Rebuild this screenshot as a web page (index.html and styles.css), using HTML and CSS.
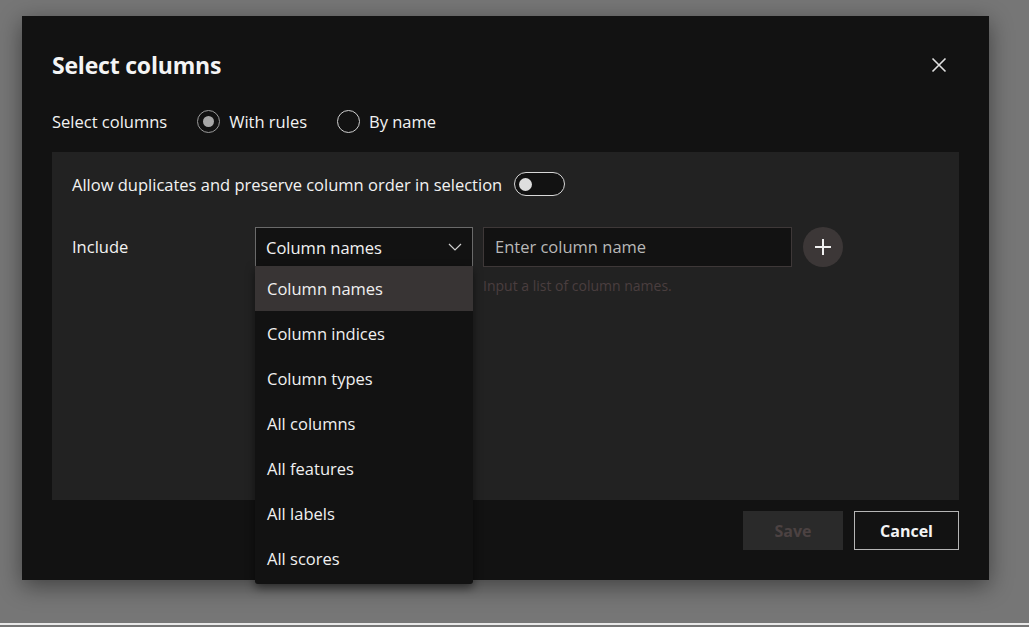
FILE: index.html
```html
<!DOCTYPE html>
<html>
<head>
<meta charset="utf-8">
<link rel="stylesheet" href="styles.css">
</head>
<body>
<div class="backdrop">
  <div class="dialog">
    <div class="header">
      <h1 class="title">Select columns</h1>
      <button class="close" aria-label="Close">
        <svg width="16" height="16" viewBox="0 0 16 16"><path d="M1.5 1.5 L14.5 14.5 M14.5 1.5 L1.5 14.5" stroke="#e0e0e0" stroke-width="1.6" fill="none"/></svg>
      </button>
    </div>
    <div class="mode-row">
      <span class="mode-label">Select columns</span>
      <label class="radio"><span class="radio-dot checked"></span>With rules</label>
      <label class="radio"><span class="radio-dot"></span>By name</label>
    </div>
    <div class="panel">
      <div class="toggle-row">
        <span>Allow duplicates and preserve column order in selection</span>
        <span class="toggle"><span class="knob"></span></span>
      </div>
      <div class="rule-row">
        <span class="rule-label">Include</span>
        <div class="select-wrap">
          <div class="select">
            <span>Column names</span>
            <svg width="14" height="8" viewBox="0 0 14 8"><path d="M1 1 L7 7 L13 1" stroke="#cfcfcf" stroke-width="1.2" fill="none"/></svg>
          </div>
          <ul class="menu">
            <li class="active">Column names</li>
            <li>Column indices</li>
            <li>Column types</li>
            <li>All columns</li>
            <li>All features</li>
            <li>All labels</li>
            <li>All scores</li>
          </ul>
        </div>
        <div class="input-wrap">
          <div class="input">Enter column name</div>
          <div class="hint">Input a list of column names.</div>
        </div>
        <button class="add" aria-label="Add">
          <svg width="18" height="18" viewBox="0 0 18 18"><path d="M9 1 V17 M1 9 H17" stroke="#f0f0f0" stroke-width="2" fill="none"/></svg>
        </button>
      </div>
    </div>
    <div class="footer">
      <button class="btn save">Save</button>
      <button class="btn cancel">Cancel</button>
    </div>
  </div>
</div>
</body>
</html>
```

FILE: styles.css
```css
* { box-sizing: border-box; }
html, body { margin: 0; padding: 0; }
body {
  background: #767676;
  font-family: "Segoe UI", "Open Sans", "Noto Sans", sans-serif;
  color: #f2f2f2;
  width: 1029px;
  height: 627px;
  overflow: hidden;
}
.backdrop {
  padding: 16px 0 0 22px;
  height: 625px;
  border-bottom: 2px solid #e8e8e8;
}
.dialog {
  position: relative;
  width: 967px;
  height: 564px;
  background: #121212;
  padding: 34px 30px 30px 30px;
  display: flex;
  flex-direction: column;
  box-shadow: 0 6px 22px rgba(0,0,0,0.45);
}
.header {
  display: flex;
  justify-content: space-between;
  align-items: center;
  height: 30px;
}
.title {
  margin: 0;
  font-size: 23px;
  font-weight: 700;
  letter-spacing: -0.2px;
  color: #f4f4f4;
}
.close {
  background: none;
  border: 0;
  padding: 0;
  margin-right: 12px;
  width: 16px;
  height: 16px;
  display: flex;
}
.mode-row {
  display: flex;
  align-items: center;
  height: 30px;
  margin-top: 26px;
  font-size: 16.5px;
}
.mode-label { margin-right: 30px; }
.radio {
  display: flex;
  align-items: center;
  margin-right: 30px;
  color: #f2f2f2;
}
.radio-dot {
  width: 23px;
  height: 23px;
  border-radius: 50%;
  border: 1.5px solid #cfcfcf;
  margin-right: 9px;
  display: flex;
  align-items: center;
  justify-content: center;
}
.radio-dot.checked { border-color: #9a9a9a; }
.radio-dot.checked::after {
  content: "";
  width: 11px;
  height: 11px;
  border-radius: 50%;
  background: #a8a8a8;
}
.panel {
  margin-top: 16px;
  height: 348px;
  background: #222222;
  padding: 20px 20px;
}
.toggle-row {
  display: flex;
  align-items: center;
  height: 24px;
  font-size: 16.5px;
}
.toggle {
  margin-left: 12px;
  width: 51px;
  height: 24px;
  border-radius: 12px;
  border: 1.5px solid #d8d8d8;
  background: #121212;
  display: flex;
  align-items: center;
  padding-left: 4px;
}
.knob {
  width: 13px;
  height: 13px;
  border-radius: 50%;
  background: #dedede;
}
.rule-row {
  display: flex;
  align-items: flex-start;
  margin-top: 31px;
}
.rule-label {
  width: 183px;
  font-size: 16.5px;
  line-height: 40px;
}
.select-wrap {
  position: relative;
  width: 218px;
}
.select {
  height: 40px;
  border: 1px solid #6a6a6a;
  background: #121212;
  display: flex;
  align-items: center;
  justify-content: space-between;
  padding: 0 10px 0 10px;
  font-size: 16.5px;
}
.menu {
  position: absolute;
  top: 39px;
  left: 0;
  width: 218px;
  margin: 0;
  padding: 0 0 3px 0;
  list-style: none;
  background: #121212;
  box-shadow: 0 4px 10px rgba(0,0,0,0.5);
  z-index: 2;
  border-radius: 0 0 3px 3px;
}
.menu li {
  height: 45px;
  line-height: 46px;
  padding-left: 12px;
  font-size: 16.5px;
  color: #f0f0f0;
}
.menu li.active { background: #383434; }
.input-wrap {
  margin-left: 10px;
  width: 309px;
}
.input {
  height: 40px;
  border: 1px solid #3e3838;
  background: #121212;
  color: #b8b8b8;
  font-size: 16.5px;
  line-height: 38px;
  padding-left: 11px;
}
.hint {
  margin-top: 9px;
  font-size: 14px;
  color: #4a3e3f;
}
.add {
  margin-left: 11px;
  width: 40px;
  height: 40px;
  border-radius: 50%;
  border: 0;
  background: #3c3737;
  display: flex;
  align-items: center;
  justify-content: center;
  padding: 0;
}
.footer {
  display: flex;
  justify-content: flex-end;
  gap: 11px;
  margin-top: 11px;
}
.btn {
  height: 39px;
  font-family: inherit;
  font-size: 16px;
  font-weight: 700;
}
.save {
  width: 100px;
  background: #2a2a2a;
  border: 0;
  color: #4c4242;
}
.cancel {
  width: 105px;
  background: #121212;
  border: 1px solid #b5b5b5;
  color: #f4f4f4;
}
```
